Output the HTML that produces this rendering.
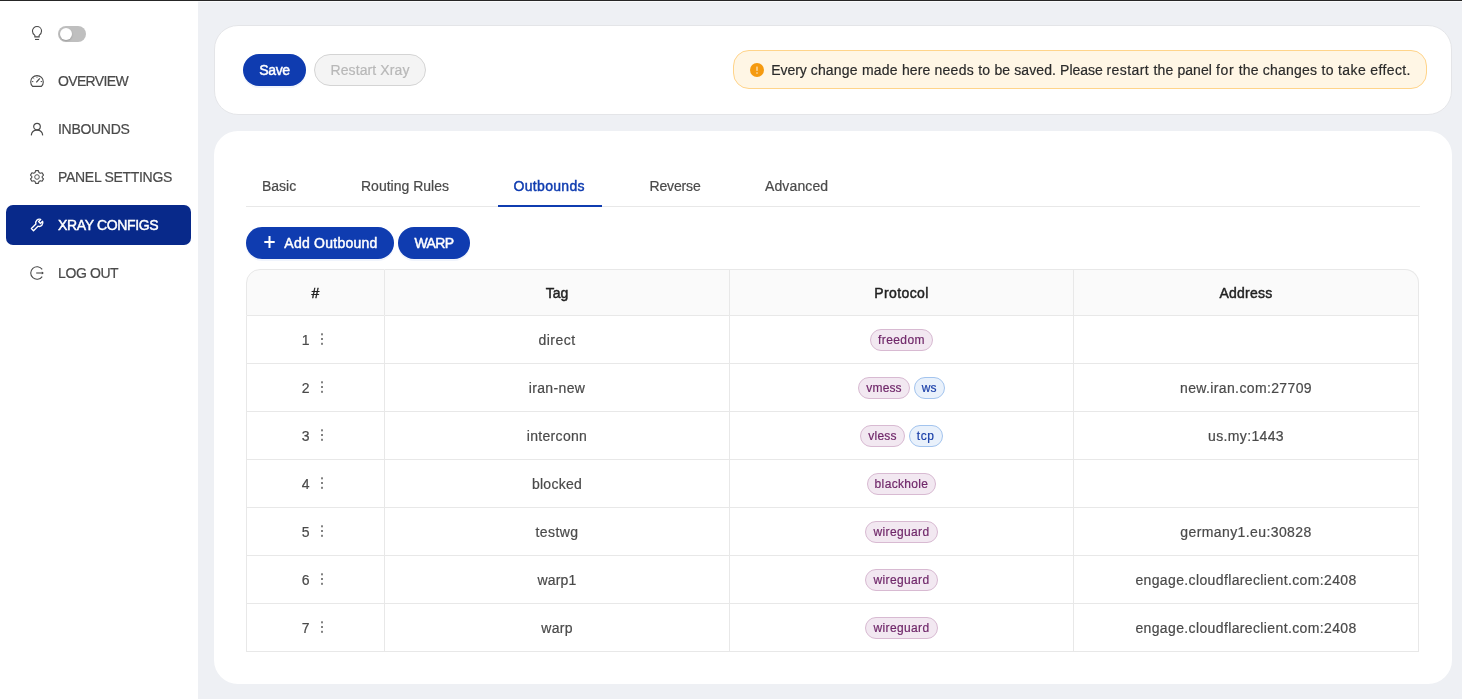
<!DOCTYPE html>
<html lang="en">
<head>
<meta charset="utf-8">
<title>Xray Configs</title>
<style>
*{box-sizing:border-box;margin:0;padding:0}
html,body{width:1462px;height:699px;overflow:hidden}
body{background:#eef0f4;font-family:"Liberation Sans",sans-serif;font-size:14px;color:#3c3c3c;position:relative;will-change:transform;-webkit-text-stroke:.2px currentColor}
.abs{position:absolute}
#topline{left:0;top:0;width:1462px;height:1px;background:#262626}
#sidebar{left:0;top:1px;width:198px;height:698px;background:#fff}
.nav{position:absolute;left:6px;width:185px;height:40px;border-radius:7px;color:#4a4a4a;font-size:14px;line-height:40px;white-space:nowrap}
.nav span{position:absolute;left:52px;top:0}
.nav svg{position:absolute;left:23px;top:12px;width:16px;height:16px}
.nav.active{background:#08298a;color:#fff}
.sb{-webkit-text-stroke:.45px currentColor}
.card{position:absolute;left:214px;width:1238px;background:#fff;border-radius:24px}
.btn{position:absolute;height:32px;border-radius:16px;background:#0f3cb0;color:#fff;font-size:14px;line-height:32px;text-align:center;white-space:nowrap;box-shadow:0 2px 0 rgba(5,60,200,.06)}
.btn.dis{background:#f4f4f4;border:1px solid #d4d4d4;color:#b8b8b8;line-height:30px;box-shadow:none}
#alert{left:733px;top:50px;width:694px;height:39px;border-radius:16px;background:#fff6e5;border:1px solid #ffd48a;color:#2b2b2b;font-size:14px;line-height:37px;white-space:nowrap}
.tab{position:absolute;top:176px;height:20px;line-height:20px;font-size:14px;color:#4a4a4a;white-space:nowrap}
.tab.on{color:#0f3cb0}
table{position:absolute;left:246px;top:269px;width:1173px;border-collapse:separate;border-spacing:0;table-layout:fixed;font-size:14px}
th,td{height:48px;text-align:center;border-right:1px solid #e8e8e8;border-bottom:1px solid #e8e8e8;color:#4a4a4a;font-weight:normal;white-space:nowrap;vertical-align:middle}
th{height:47px;background:#fafafa;color:#222;border-top:1px solid #e8e8e8}
th:first-child,td:first-child{border-left:1px solid #e8e8e8}
th:first-child{border-top-left-radius:14px}
th:last-child{border-top-right-radius:14px}
.tag{display:inline-block;height:22px;line-height:20px;padding:0 7px;border-radius:11px;font-size:12px;border:1px solid #d8bad2;background:#f2e8f1;color:#70286a;margin:0 2px;vertical-align:middle}
.tag.b{border-color:#a3c4ee;background:#e9f1fb;color:#1a3fa8}
.num{display:inline-block;width:8px;margin-right:10.5px;vertical-align:middle}
td:first-child{padding-right:5px}
.dots{display:inline-block;width:4px;height:14px;vertical-align:middle;position:relative;top:-1px}
</style>
</head>
<body>
<div id="topline" class="abs"></div><div class="abs" style="left:198px;top:1px;width:1264px;height:1px;background:#f9fafb"></div>
<div id="sidebar" class="abs">
<svg class="abs" style="left:31px;top:24px;width:12px;height:16px" viewBox="0 0 12 16" fill="none" stroke="#4a4a4a" stroke-width="1.1"><path d="M3.85 11.85 V10.4 C2.4 9.4 1.45 8 1.45 6 A4.55 4.55 0 0 1 10.55 6 C10.55 8 9.6 9.4 8.15 10.4 V11.85 Z"/><path d="M4 14.45 H8.1" stroke-width="1.1"/></svg>
<div class="abs" style="left:58px;top:25px;width:28px;height:16px;border-radius:8px;background:#bfbfbf"><div class="abs" style="left:2px;top:2px;width:12px;height:12px;border-radius:6px;background:#fff;box-shadow:0 1px 2px rgba(0,0,0,.2)"></div></div>

<div class="nav" style="top:60px"><svg viewBox="0 0 16 16" fill="none" stroke="#4a4a4a" stroke-width="1.1"><path d="M3.6 13.4 A6.3 6.3 0 1 1 12.4 13.4 Z"/><path d="M7.3 9.4 L10.8 5.3" stroke-width="1.2"/><path d="M8 3.8 V4.7 M2.9 8.6 H4.3 M11.7 8.6 H13.1 M4.3 4.9 L5.2 5.7" stroke-width="1"/></svg><span style="letter-spacing:-.65px">OVERVIEW</span></div>
<div class="nav" style="top:108px"><svg viewBox="0 0 16 16" fill="none" stroke="#4a4a4a" stroke-width="1.2"><circle cx="8" cy="5.6" r="3.3"/><path d="M2.3 14.4 C2.6 11 5 9.2 8 9.2 S13.4 11 13.7 14.4"/></svg><span style="letter-spacing:-.3px">INBOUNDS</span></div>
<div class="nav" style="top:156px"><svg viewBox="0 0 16 16" fill="none" stroke="#4a4a4a" stroke-width="1.1"><circle cx="8" cy="8" r="2.3" stroke-width=".95"/><path d="M6.6 1.6 H9.4 L9.9 3.4 L11.3 4.2 L13.1 3.7 L14.5 6.1 L13.2 7.4 V8.6 L14.5 9.9 L13.1 12.3 L11.3 11.8 L9.9 12.6 L9.4 14.4 H6.6 L6.1 12.6 L4.7 11.8 L2.9 12.3 L1.5 9.9 L2.8 8.6 V7.4 L1.5 6.1 L2.9 3.7 L4.7 4.2 L6.1 3.4 Z" stroke-linejoin="round"/></svg><span style="letter-spacing:-.3px">PANEL SETTINGS</span></div>
<div class="nav active" style="top:204px"><svg viewBox="0 0 16 16" fill="none" stroke="#fff" stroke-width="1.4" stroke-linejoin="round"><path d="M13.6 4.3 L11.5 6.4 L9.6 4.5 L11.7 2.4 A3.7 3.7 0 0 0 6.9 7.1 L2.4 11.6 L4.5 13.7 L9 9.2 A3.7 3.7 0 0 0 13.6 4.3 Z"/></svg><span class="sb" style="letter-spacing:-.35px">XRAY CONFIGS</span></div>
<div class="nav" style="top:252px"><svg viewBox="0 0 16 16" fill="none" stroke="#4a4a4a" stroke-width="1.1"><path d="M13.2 4.4 A6.3 6.3 0 1 0 13.2 11.6"/><path d="M7.2 8 H14"/><path d="M12.8 6.4 L14.9 8 L12.8 9.6 Z" fill="#4a4a4a" stroke="none"/></svg><span style="letter-spacing:-.39px">LOG OUT</span></div>
</div>

<div class="card" style="top:25px;height:90px;border:1px solid #e4e5e8"></div>
<div class="btn" style="left:243px;top:54px;width:63px"><span class="sb" style="letter-spacing:-.3px">Save</span></div>
<div class="btn dis" style="left:314px;top:54px;width:112px"><span style="letter-spacing:.1px">Restart Xray</span></div>
<div id="alert" class="abs"><svg class="abs" style="left:16px;top:12px;width:14px;height:14px" viewBox="0 0 14 14"><circle cx="7" cy="7" r="7" fill="#f59a10"/><rect x="6.45" y="3.4" width="1.1" height="4.6" rx=".4" fill="#fff" opacity=".85"/><circle cx="7" cy="10.1" r=".75" fill="#fff" opacity=".85"/></svg><span class="abs" style="left:37.2px;top:1px"><span style="letter-spacing:-0.03px">Every </span><span style="letter-spacing:0.20px">change </span><span style="letter-spacing:0.22px">made </span><span style="letter-spacing:0.12px">here </span><span style="letter-spacing:0.28px">needs </span><span style="letter-spacing:0.24px">to </span><span style="letter-spacing:0.11px">be </span><span style="letter-spacing:0.10px">saved. </span><span style="letter-spacing:-0.05px">Please </span><span style="letter-spacing:0.42px">restart </span><span style="letter-spacing:0.16px">the </span><span style="letter-spacing:0.06px">panel </span><span style="letter-spacing:0.64px">for </span><span style="letter-spacing:0.16px">the </span><span style="letter-spacing:0.23px">changes </span><span style="letter-spacing:0.38px">to </span><span style="letter-spacing:0.37px">take </span><span style="letter-spacing:0.38px">effect.</span></span></div>

<div class="card" style="top:131px;height:553px"></div>
<div class="tab" style="left:262px">Basic</div>
<div class="tab" style="left:361px">Routing Rules</div>
<div class="tab on sb" style="left:513.5px;letter-spacing:.32px">Outbounds</div>
<div class="tab" style="left:649.5px;letter-spacing:-.15px">Reverse</div>
<div class="tab" style="left:765px;letter-spacing:.12px">Advanced</div>
<div class="abs" style="left:246px;top:206px;width:1174px;height:1px;background:#e8e8e8"></div>
<div class="abs" style="left:498px;top:205px;width:104px;height:2px;background:#0f3cb0"></div>

<div class="btn" style="left:246px;top:227px;width:148px"><svg class="abs" style="left:17.5px;top:8.8px;width:11px;height:12px" viewBox="0 0 11 12" stroke="#fff" stroke-width="2"><path d="M5.5 .1 V11.9 M.3 6 H10.7"/></svg><span class="abs sb" style="left:38.3px;top:0;letter-spacing:.25px">Add Outbound</span></div>
<div class="btn" style="left:398px;top:227px;width:72px"><span class="sb" style="letter-spacing:-.6px">WARP</span></div>

<table>
<colgroup><col style="width:139px"><col style="width:345px"><col style="width:344px"><col style="width:345px"></colgroup>
<tr><th><span class="sb">#</span></th><th><span class="sb">Tag</span></th><th><span class="sb" style="letter-spacing:.42px">Protocol</span></th><th><span class="sb" style="letter-spacing:.27px">Address</span></th></tr>
<tr><td><span class="num">1</span><svg class="dots" viewBox="0 0 4 14"><rect x="1" y="1.3" width="2" height="2" fill="#828282"/><rect x="1" y="6" width="2" height="2" fill="#828282"/><rect x="1" y="10.8" width="2" height="2" fill="#828282"/></svg></td><td><span style="letter-spacing:0.48px">direct</span></td><td><span class="tag " style="letter-spacing:0.41px">freedom</span></td><td></td></tr>
<tr><td><span class="num">2</span><svg class="dots" viewBox="0 0 4 14"><rect x="1" y="1.3" width="2" height="2" fill="#828282"/><rect x="1" y="6" width="2" height="2" fill="#828282"/><rect x="1" y="10.8" width="2" height="2" fill="#828282"/></svg></td><td><span style="letter-spacing:0.37px">iran-new</span></td><td><span class="tag " style="letter-spacing:0.16px">vmess</span><span class="tag b" style="letter-spacing:0.10px">ws</span></td><td><span style="letter-spacing:0.37px">new.iran.com:27709</span></td></tr>
<tr><td><span class="num">3</span><svg class="dots" viewBox="0 0 4 14"><rect x="1" y="1.3" width="2" height="2" fill="#828282"/><rect x="1" y="6" width="2" height="2" fill="#828282"/><rect x="1" y="10.8" width="2" height="2" fill="#828282"/></svg></td><td><span style="letter-spacing:0.30px">interconn</span></td><td><span class="tag " style="letter-spacing:0.22px">vless</span><span class="tag b" style="letter-spacing:0.60px">tcp</span></td><td><span style="letter-spacing:0.36px">us.my:1443</span></td></tr>
<tr><td><span class="num">4</span><svg class="dots" viewBox="0 0 4 14"><rect x="1" y="1.3" width="2" height="2" fill="#828282"/><rect x="1" y="6" width="2" height="2" fill="#828282"/><rect x="1" y="10.8" width="2" height="2" fill="#828282"/></svg></td><td><span style="letter-spacing:0.27px">blocked</span></td><td><span class="tag " style="letter-spacing:0.34px">blackhole</span></td><td></td></tr>
<tr><td><span class="num">5</span><svg class="dots" viewBox="0 0 4 14"><rect x="1" y="1.3" width="2" height="2" fill="#828282"/><rect x="1" y="6" width="2" height="2" fill="#828282"/><rect x="1" y="10.8" width="2" height="2" fill="#828282"/></svg></td><td><span style="letter-spacing:0.42px">testwg</span></td><td><span class="tag " style="letter-spacing:0.37px">wireguard</span></td><td><span style="letter-spacing:0.40px">germany1.eu:30828</span></td></tr>
<tr><td><span class="num">6</span><svg class="dots" viewBox="0 0 4 14"><rect x="1" y="1.3" width="2" height="2" fill="#828282"/><rect x="1" y="6" width="2" height="2" fill="#828282"/><rect x="1" y="10.8" width="2" height="2" fill="#828282"/></svg></td><td><span style="letter-spacing:0.16px">warp1</span></td><td><span class="tag " style="letter-spacing:0.37px">wireguard</span></td><td><span style="letter-spacing:0.37px">engage.cloudflareclient.com:2408</span></td></tr>
<tr><td><span class="num">7</span><svg class="dots" viewBox="0 0 4 14"><rect x="1" y="1.3" width="2" height="2" fill="#828282"/><rect x="1" y="6" width="2" height="2" fill="#828282"/><rect x="1" y="10.8" width="2" height="2" fill="#828282"/></svg></td><td><span style="letter-spacing:0.30px">warp</span></td><td><span class="tag " style="letter-spacing:0.37px">wireguard</span></td><td><span style="letter-spacing:0.37px">engage.cloudflareclient.com:2408</span></td></tr>
</table>
</body>
</html>
